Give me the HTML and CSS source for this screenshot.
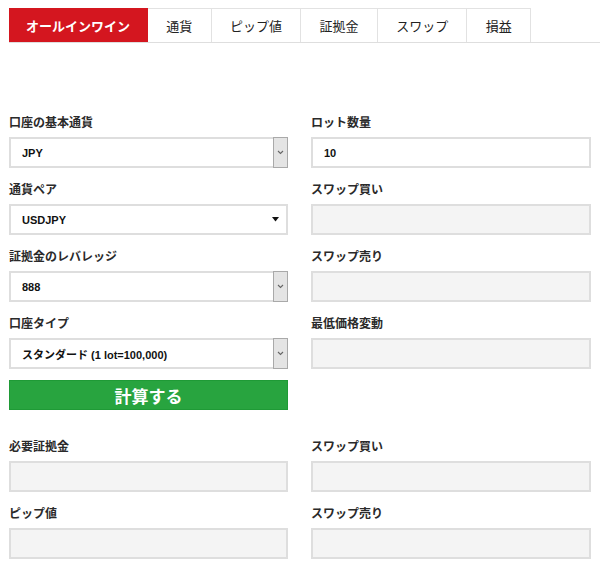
FILE: index.html
```html
<!DOCTYPE html>
<html lang="ja">
<head>
<meta charset="utf-8">
<title>計算機</title>
<link rel="stylesheet" href="styles.css">
</head>
<body>
<nav class="tabs">
  <div class="tab active">オールインワイン</div>
  <div class="tab">通貨</div>
  <div class="tab">ピップ値</div>
  <div class="tab">証拠金</div>
  <div class="tab">スワップ</div>
  <div class="tab">損益</div>
</nav>

<section class="grid top">
  <div class="col">
    <div class="group">
      <div class="label">口座の基本通貨</div>
      <div class="field select">
        <span class="value">JPY</span>
        <span class="arrow"><svg width="7" height="5" viewBox="0 0 7 5"><path d="M1 1 L3.5 3.5 L6 1" fill="none" stroke="#666" stroke-width="1.1"/></svg></span>
      </div>
    </div>
    <div class="group">
      <div class="label">通貨ペア</div>
      <div class="field select">
        <span class="value">USDJPY</span>
        <span class="caret"><svg width="7" height="5" viewBox="0 0 7 5"><path d="M0 0 H7 L3.5 4.5 Z" fill="#111"/></svg></span>
      </div>
    </div>
    <div class="group">
      <div class="label">証拠金のレバレッジ</div>
      <div class="field select">
        <span class="value">888</span>
        <span class="arrow"><svg width="7" height="5" viewBox="0 0 7 5"><path d="M1 1 L3.5 3.5 L6 1" fill="none" stroke="#666" stroke-width="1.1"/></svg></span>
      </div>
    </div>
    <div class="group">
      <div class="label">口座タイプ</div>
      <div class="field select">
        <span class="value">スタンダード (1 lot=100,000)</span>
        <span class="arrow"><svg width="7" height="5" viewBox="0 0 7 5"><path d="M1 1 L3.5 3.5 L6 1" fill="none" stroke="#666" stroke-width="1.1"/></svg></span>
      </div>
    </div>
    <div class="button">計算する</div>
  </div>
  <div class="col">
    <div class="group">
      <div class="label">ロット数量</div>
      <div class="field"><span class="value">10</span></div>
    </div>
    <div class="group">
      <div class="label">スワップ買い</div>
      <div class="field readonly"></div>
    </div>
    <div class="group">
      <div class="label">スワップ売り</div>
      <div class="field readonly"></div>
    </div>
    <div class="group">
      <div class="label">最低価格変動</div>
      <div class="field readonly"></div>
    </div>
  </div>
</section>

<section class="grid bottom">
  <div class="col">
    <div class="group">
      <div class="label">必要証拠金</div>
      <div class="field readonly"></div>
    </div>
    <div class="group">
      <div class="label">ピップ値</div>
      <div class="field readonly"></div>
    </div>
  </div>
  <div class="col">
    <div class="group">
      <div class="label">スワップ買い</div>
      <div class="field readonly"></div>
    </div>
    <div class="group">
      <div class="label">スワップ売り</div>
      <div class="field readonly"></div>
    </div>
  </div>
</section>
</body>
</html>
```

FILE: styles.css
```css
* { box-sizing: border-box; }
html, body { margin: 0; padding: 0; background: #fff; }
body {
  font-family: "Liberation Sans", "Noto Sans CJK JP", sans-serif;
  color: #222;
  width: 600px;
  overflow: hidden;
}
.tabs {
  display: flex;
  margin: 8px 0 0 9px;
  height: 35px;
  border-bottom: 1px solid #dedede;
}
.tab {
  display: flex;
  align-items: center;
  justify-content: center;
  padding: 0 18.3px;
  height: 34px;
  font-family: "Noto Sans CJK JP", sans-serif;
  font-size: 13px;
  color: #222;
  border-top: 1px solid #e2e2e2;
  border-right: 1px solid #e2e2e2;
}
.tab.active {
  background: #d4161f;
  color: #fff;
  font-weight: bold;
  padding: 0 17px;
  border-color: #d4161f;
}
.grid {
  display: grid;
  grid-template-columns: 279px 280px;
  column-gap: 23px;
  padding-left: 9px;
}
.top { margin-top: 70px; }
.bottom { margin-top: 27px; }
.group { margin-bottom: 12px; }
.label {
  font-family: "Noto Sans CJK JP", sans-serif;
  font-weight: bold;
  font-size: 12px;
  line-height: 18px;
  height: 18px;
  color: #2a2a2a;
  margin-bottom: 6px;
}
.field {
  height: 31px;
  border: 2px solid #dedede;
  background: #fff;
  display: flex;
  align-items: center;
  padding-left: 11px;
  position: relative;
}
.field.readonly { background: #f4f4f4; }
.value {
  font-family: "Liberation Sans", "Noto Sans CJK JP", sans-serif;
  font-weight: bold;
  font-size: 11px;
  color: #111;
}
.arrow {
  position: absolute;
  top: -2px;
  right: -2px;
  bottom: -2px;
  width: 15px;
  background: #e4e4e4;
  border: 1px solid #a9a9a9;
  display: flex;
  align-items: center;
  justify-content: center;
}
.caret {
  position: absolute;
  right: 7px;
  top: 11px;
  display: flex;
}
.button {
  margin-top: -1px;
  height: 30px;
  background: #28a43f;
  border: 1px solid #1f9a36;
  color: #fff;
  font-family: "Noto Sans CJK JP", sans-serif;
  font-weight: bold;
  font-size: 17px;
  display: flex;
  align-items: center;
  justify-content: center;
}
```
